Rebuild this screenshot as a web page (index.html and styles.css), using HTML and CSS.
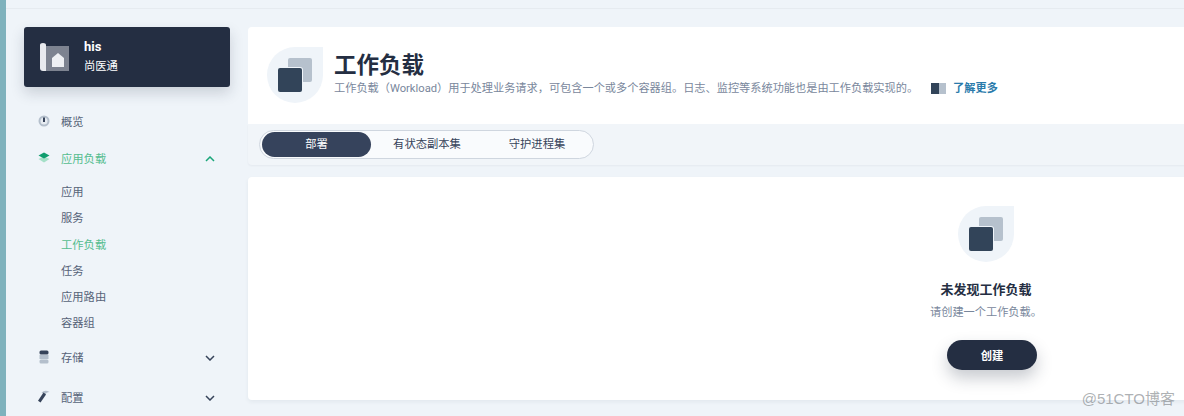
FILE: index.html
```html
<!DOCTYPE html>
<html lang="zh">
<head>
  <meta charset="UTF-8" />
  <title>工作负载</title>
  <link rel="stylesheet" href="styles.css">
</head>
<body>
  <div class="edge"></div>
  <div class="page">
    <aside class="sidebar">
      <div class="project">
        <svg class="project-icon" width="30" height="30" viewBox="0 0 30 30">
          <rect x="5" y="4" width="25" height="25" fill="#7d8390" />
          <path d="M1 3q0-2 3-2q3 0 3 2v26h-3q-3 0-3-3z" fill="#e8eaee" />
          <path d="M13 16l6-5l6 5v9h-12z" fill="#eef0f3" />
        </svg>
        <div>
          <div class="project-name">his</div>
          <div class="project-sub">尚医通</div>
        </div>
      </div>

      <nav class="nav">
        <div class="nav-item overview">
          <svg class="nav-icon" width="12" height="12" viewBox="0 0 12 12">
            <circle cx="6" cy="6" r="5.5" fill="#b4bfcc" />
            <circle cx="6" cy="6" r="3.5" fill="#e6ebf1" />
            <rect x="5" y="2.5" width="2" height="4.5" fill="#36435a" />
          </svg>
          <span>概览</span>
        </div>

        <div class="nav-item open">
          <svg class="nav-icon" width="12" height="12" viewBox="0 0 12 12">
            <path d="M0.5 7l5.5-2.5l5.500 2.500l-5.500 3.500z" fill="#a5e0c8" />
            <path d="M0.500 3.500l5.500-3l5.500 3l-5.500 3z" fill="#0f9d6e" />
          </svg>
          <span>应用负载</span>
          <svg class="chevron" width="10" height="6" viewBox="0 0 10 6"><path d="M1 5l4-4l4 4" fill="none" stroke="#1aa67a" stroke-width="1.500" /></svg>
        </div>
        <div class="subnav">
          <div class="sub-item">应用</div>
          <div class="sub-item">服务</div>
          <div class="sub-item active">工作负载</div>
          <div class="sub-item">任务</div>
          <div class="sub-item">应用路由</div>
          <div class="sub-item">容器组</div>
        </div>

        <div class="nav-item storage">
          <svg class="nav-icon" width="12" height="14" viewBox="0 0 12 14">
            <rect x="1.500" y="0.500" width="9" height="4" rx="1.500" fill="#36435a" />
            <rect x="1.500" y="5" width="9" height="4" fill="#b4bfcc" />
            <rect x="1.500" y="9.500" width="9" height="4" rx="1.500" fill="#b4bfcc" />
          </svg>
          <span>存储</span>
          <svg class="chevron" width="10" height="6" viewBox="0 0 10 6"><path d="M1 1l4 4l4-4" fill="none" stroke="#36435a" stroke-width="1.500" /></svg>
        </div>
        <div class="nav-item config">
          <svg class="nav-icon" width="12" height="13" viewBox="0 0 12 13">
            <path d="M3.500 2.500q3.500-3 8-.5q-3 0-4.500 3z" fill="#b4bfcc" />
            <path d="M5.500 2.500l2.500 2l-5.500 8l-2.500-1.700z" fill="#36435a" />
          </svg>
          <span>配置</span>
          <svg class="chevron" width="10" height="6" viewBox="0 0 10 6"><path d="M1 1l4 4l4-4" fill="none" stroke="#36435a" stroke-width="1.500" /></svg>
        </div>
      </nav>
    </aside>

    <main class="main">
      <section class="head-card">
        <div class="blob">
          <span class="square back"></span>
          <span class="square front"></span>
        </div>
        <div>
          <h1>工作负载</h1>
          <p class="desc">工作负载（Workload）用于处理业务请求，可包含一个或多个容器组。日志、监控等系统功能也是由工作负载实现的。<span class="more-icon"><i></i><i></i></span><a class="more" href="#">了解更多</a></p>
        </div>
      </section>

      <div class="tab-bar">
        <div class="tabs">
          <div class="tab selected">部署</div>
          <div class="tab">有状态副本集</div>
          <div class="tab last">守护进程集</div>
        </div>
      </div>

      <section class="empty-card">
        <div class="blob">
          <span class="square back"></span>
          <span class="square front"></span>
        </div>
        <div class="empty-title">未发现工作负载</div>
        <div class="empty-text">请创建一个工作负载。</div>
        <button class="create">创建</button>
      </section>
    </main>
  </div>
  <div class="watermark">@51CTO博客</div>
</body>
</html>
```

FILE: styles.css
```css
html, body {
  height: 416px;
  overflow: hidden;
}

body {
  margin: 0;
  display: flex;
  font-family: "Roboto", "Noto Sans CJK SC", sans-serif;
  font-size: 11.300px;
  color: #36435a;
  background-color: #eff4f9;
}

.edge {
  width: 6px;
  flex: none;
  background-color: #7fb2bd;
}

.page {
  display: flex;
  flex: none;
  padding-top: 8px;
  background: linear-gradient(#eff4f9 8px, #e6ebf0 8px, #e6ebf0 9px, #eff4f9 9px);
}

.sidebar {
  width: 206px;
  margin: 0 18px;
  flex: none;
}

.project {
  display: flex;
  align-items: center;
  gap: 15px;
  height: 60px;
  margin-top: 19px;
  padding-left: 15px;
  background-color: #242e42;
  border-radius: 3px;
  box-shadow: 0 6px 14px rgba(36,46,66,0.18);
  color: white;
}

.project-name {
  font-size: 13px;
  font-weight: 700;
  line-height: 18px;
}

.project-sub {
  line-height: 20px;
  margin-top: 1px;
}

.nav {
  margin-top: 24px;
  padding-left: 14px;
}

.nav-item {
  display: flex;
  align-items: center;
  height: 20px;
  position: relative;
  color: #566378;
}

.nav-icon {
  width: 12px;
  flex: none;
  margin-right: 11px;
}

.chevron {
  position: absolute;
  left: 167px;
  top: 8px;
}

.open {
  margin-top: 17px;
  color: #55bd8f;
}

.subnav {
  margin-top: 11px;
  padding-left: 23px;
}

.sub-item {
  height: 26.300px;
  line-height: 27px;
  color: #566378;
}

.sub-item.active {
  color: #55bd8f;
}

.storage {
  margin-top: 10px;
}

.config {
  margin-top: 20px;
}

.main {
  width: 1476px;
  flex: none;
  margin-top: 19px;
}

.head-card {
  display: flex;
  gap: 11px;
  height: 97px;
  padding: 20px 0 0 19px;
  box-sizing: border-box;
  background-color: white;
  border-radius: 4px 4px 0 0;
}

.blob {
  position: relative;
  width: 56px;
  height: 56px;
  flex: none;
  background-color: #eff4f9;
  border-radius: 50% 0 50% 50%;
}

.square {
  position: absolute;
  width: 24px;
  height: 24px;
  border-radius: 2px;
}

.back {
  left: 21px;
  top: 11px;
  background-color: #b6c1cd;
}

.front {
  left: 11px;
  top: 21px;
  background-color: #324459;
  box-shadow: 0 0 0 1px #eff4f9;
}

h1 {
  margin: 3px 0 0;
  font-size: 22.500px;
  line-height: 30px;
  font-weight: 700;
  color: #242e42;
}

.desc {
  margin: 0;
  line-height: 18px;
  font-size: 11.200px;
  color: #79879c;
  white-space: nowrap;
}

.more-icon {
  display: inline-flex;
  margin-left: 13px;
  margin-right: 7px;
  vertical-align: -2px;
}

.more-icon i {
  width: 8px;
  height: 11px;
  background-color: #324459;
}

.more-icon i + i {
  width: 7px;
  background-color: #b6c1cd;
}

.more {
  color: #2a7bab;
  font-weight: 700;
  text-decoration: none;
}

.tab-bar {
  height: 41px;
  padding: 6px 0 0 11px;
  box-sizing: border-box;
  background-color: #f1f5f9;
  border-radius: 0 0 4px 4px;
  box-shadow: 0 1px 2px rgba(36,46,66,0.05);
}

.tabs {
  display: inline-flex;
  height: 29px;
  box-sizing: border-box;
  padding: 1px 2px;
  background-color: #f9fbfd;
  border: 1px solid #cfd6df;
  border-radius: 15px;
}

.tab {
  width: 112px;
  line-height: 25px;
  text-align: center;
  color: #36435a;
}

.tab.selected {
  width: 109px;
  color: white;
  background-color: #36435c;
  border-radius: 13px;
}

.tab.last {
  width: 108px;
}

.empty-card {
  display: flex;
  flex-direction: column;
  align-items: center;
  height: 223px;
  margin-top: 12px;
  padding-top: 29px;
  box-sizing: border-box;
  background-color: white;
  border-radius: 4px;
  box-shadow: 0 2px 4px rgba(36,46,66,0.06);
}

.empty-title {
  margin-top: 18px;
  font-size: 13px;
  font-weight: 700;
  line-height: 20px;
  color: #242e42;
}

.empty-text {
  margin-top: 3px;
  line-height: 20px;
  font-size: 11.200px;
  color: #79879c;
}

.create {
  width: 90px;
  height: 30px;
  margin: 17px 0 0 12px;
  border: 0;
  border-radius: 15px;
  font-family: inherit;
  font-size: 11.300px;
  font-weight: 700;
  color: white;
  background-color: #242e42;
  box-shadow: 0 8px 16px rgba(36,46,66,0.25);
}

.watermark {
  position: absolute;
  right: 9px;
  top: 389px;
  font-family: "Liberation Sans", "Noto Sans CJK SC", sans-serif;
  font-size: 15px;
  line-height: 20px;
  color: rgba(120,125,130,0.6);
}
```
